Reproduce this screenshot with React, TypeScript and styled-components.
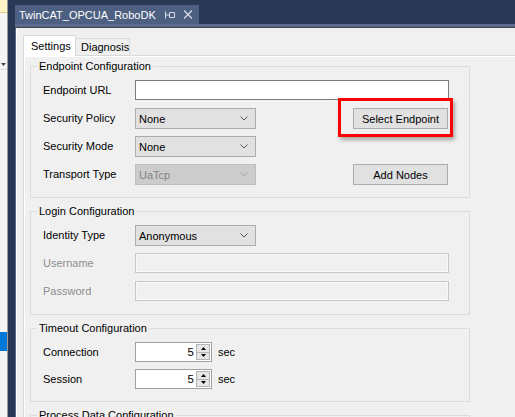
import React from "react";
import styled, { createGlobalStyle } from "styled-components";

const GlobalStyle = createGlobalStyle`
  html, body {
    margin: 0;
    padding: 0;
    background: #293955;
  }
  body {
    font-family: "Liberation Sans", Arial, sans-serif;
    font-size: 11px;
    color: #000;
  }
  * {
    box-sizing: border-box;
  }
`;

const Frame = styled.div`
  width: 515px;
  height: 417px;
  overflow: hidden;
  display: flex;
  background: #293955;
`;

// left docked panel that peeks in at the edge
const Sidebar = styled.div`
  width: 8px;
  flex: none;
  margin-right: 7px;
  background: #f5f5f5;
  border-right: 1px solid #9a9a9a;
  display: flex;
  flex-direction: column;
`;

const SideHeader = styled.div`
  height: 13px;
  background: #fff4c4;
  border-bottom: 1px solid #e3cf8c;
`;

const SideCombo = styled.div`
  height: 57px;
  display: flex;
  align-items: flex-end;
  padding: 0 0 3px 1px;
  border-bottom: 1px solid #dadada;
`;

const SideSelection = styled.div`
  margin-top: 262px;
  height: 19px;
  background: #0078d7;
`;

const DocWindow = styled.div`
  flex: 1;
  min-width: 0;
  display: flex;
  flex-direction: column;
`;

const DocTabRow = styled.div`
  height: 24px;
  flex: none;
  padding-top: 5px;
  display: flex;
`;

const DocTab = styled.div`
  width: 184px;
  height: 19px;
  display: flex;
  align-items: center;
  padding-left: 4px;
  background: #4d6082;
  color: #fff;
  font-size: 11px;
`;

const DocTitle = styled.span`
  flex: 1;
  white-space: nowrap;
`;

const DocIcon = styled.svg<{ $gap: number }>`
  flex: none;
  margin-right: ${(p) => p.$gap}px;
`;

const DocWell = styled.div`
  height: 4px;
  flex: none;
  background: #5d6b8b;
  border-bottom: 1px solid #3c4350;
`;

const DocBody = styled.div`
  flex: 1;
  display: flex;
  flex-direction: column;
  overflow: hidden;
  padding: 7px 0 0 7px;
  background: #f0f0f0;
  border-left: 1px solid #5d6b8b;
  box-shadow: inset 1px 0 0 #ffffff;
`;

const TabStrip = styled.div`
  height: 20px;
  flex: none;
  display: flex;
  align-items: flex-end;
  position: relative;
  z-index: 1;
`;

const TabButton = styled.div<{ $active?: boolean }>`
  display: flex;
  align-items: center;
  border: 1px solid #d9d9d9;
  border-bottom: none;
  ${(p) =>
    p.$active
      ? `
    width: 53px;
    height: 21px;
    margin-bottom: -1px;
    padding-left: 7px;
    background: #ffffff;
  `
      : `
    width: 54px;
    height: 17px;
    padding-left: 5px;
    border-left: none;
    background: #f0f0f0;
  `}
`;

const TabPage = styled.div`
  width: 520px;
  flex: 1;
  display: flex;
  flex-direction: column;
  gap: 7px;
  padding: 4px 0 0 6px;
  background: #f0f0f0;
  border: 1px solid #d9d9d9;
  box-shadow: inset 1px 1px 0 #ffffff;
`;

const Group = styled.fieldset`
  width: 440px;
  min-width: 0;
  margin: 0;
  padding: 0;
  flex: none;
  border: 1px solid #dcdcdc;
`;

const GroupTitle = styled.legend`
  margin-left: 6px;
  padding: 0 2px;
  line-height: 13px;
  font-size: 11px;
`;

const GroupBody = styled.div<{ $columns: string; $row: number }>`
  display: grid;
  grid-template-columns: ${(p) => p.$columns};
  grid-auto-rows: ${(p) => p.$row}px;
  row-gap: 7px;
  align-items: center;
  padding: 7px 20px 12px 12px;
`;

const Label = styled.span<{ $disabled?: boolean }>`
  grid-column: 1;
  line-height: 13px;
  white-space: nowrap;
  color: ${(p) => (p.$disabled ? "#8d8d8d" : "#000")};
`;

const TextBox = styled.div<{ $disabled?: boolean }>`
  grid-column: 2 / span 3;
  align-self: start;
  height: 20px;
  background: ${(p) => (p.$disabled ? "#f0f0f0" : "#ffffff")};
  border: 1px solid ${(p) => (p.$disabled ? "#c8c8c8" : "#7a7a7a")};
  box-shadow: ${(p) => (p.$disabled ? "inset 0 0 0 1px #fafafa" : "none")};
`;

const Combo = styled.div<{ $disabled?: boolean }>`
  grid-column: 2;
  height: 21px;
  display: flex;
  align-items: center;
  justify-content: space-between;
  padding: 0 7px 0 3px;
  background: ${(p) => (p.$disabled ? "#cccccc" : "#e1e1e1")};
  border: 1px solid ${(p) => (p.$disabled ? "#bfbfbf" : "#adadad")};
  color: ${(p) => (p.$disabled ? "#838383" : "#000")};
`;

const ButtonSlot = styled.div`
  grid-column: 4;
  position: relative;
  width: 95px;
  height: 21px;
`;

const Button = styled.div`
  width: 100%;
  height: 100%;
  display: flex;
  align-items: center;
  justify-content: center;
  background: #e1e1e1;
  border: 1px solid #adadad;
`;

// red annotation frame drawn over the screenshot
const Highlight = styled.div`
  position: absolute;
  top: -10px;
  left: -15px;
  right: -5px;
  bottom: -8px;
  border: 3px solid #ff0000;
  box-shadow: 2px 3px 4px rgba(0, 0, 0, 0.3);
  pointer-events: none;
`;

const NumericRow = styled.div`
  grid-column: 2;
  display: flex;
  align-items: center;
`;

const Numeric = styled.div`
  width: 77px;
  height: 20px;
  flex: none;
  display: flex;
  padding: 1px 1px 1px 0;
  background: #ffffff;
  border: 1px solid #a0a0a0;
`;

const NumericValue = styled.span`
  flex: 1;
  text-align: right;
  padding-right: 2px;
  line-height: 16px;
  font-size: 11.5px;
`;

const Spin = styled.div`
  width: 14px;
  display: flex;
  flex-direction: column;
`;

const SpinButton = styled.div`
  flex: 1;
  display: flex;
  align-items: center;
  justify-content: center;
  background: #e6e6e6;
  border: 1px solid #b4b4b4;
  & + & {
    border-top: none;
  }
`;

const Unit = styled.span`
  margin-left: 6px;
`;

const Chevron = ({ disabled }: { disabled?: boolean }) => (
  <svg width="8" height="5" viewBox="0 0 8 5">
    <polyline
      points="0.5,0.5 4,4 7.5,0.5"
      fill="none"
      stroke={disabled ? "#a9a9a9" : "#555"}
      strokeWidth="1"
    />
  </svg>
);

const Triangle = ({ up }: { up?: boolean }) => (
  <svg width="5" height="3" viewBox="0 0 5 3">
    <polygon points={up ? "0,3 2.5,0 5,3" : "0,0 2.5,3 5,0"} fill="#000" />
  </svg>
);

const NumericField = ({ value }: { value: number }) => (
  <NumericRow>
    <Numeric>
      <NumericValue>{value}</NumericValue>
      <Spin>
        <SpinButton>
          <Triangle up />
        </SpinButton>
        <SpinButton>
          <Triangle />
        </SpinButton>
      </Spin>
    </Numeric>
    <Unit>sec</Unit>
  </NumericRow>
);

const COLUMNS = "92px 121px 97px 96px";

const App = () => {
  return (
    <Frame>
      <GlobalStyle />
      <Sidebar>
        <SideHeader />
        <SideCombo>
          <svg width="5" height="3" viewBox="0 0 5 3">
            <polygon points="0,0 2.5,3 5,0" fill="#444" />
          </svg>
        </SideCombo>
        <SideSelection />
      </Sidebar>

      <DocWindow>
        <DocTabRow>
          <DocTab>
            <DocTitle>TwinCAT_OPCUA_RoboDK</DocTitle>
            <DocIcon $gap={8} width="10" height="8" viewBox="0 0 10 8">
              <path d="M0.5 0.5 V7.5 M1 4 H4 M4.5 1.5 H9.5 V6.5 H4.5 Z" fill="none" stroke="#d5dbe6" strokeWidth="1" />
            </DocIcon>
            <DocIcon $gap={6} width="10" height="9" viewBox="0 0 10 9">
              <path d="M1 0.5 L9 8.5 M9 0.5 L1 8.5" stroke="#d5dbe6" strokeWidth="1.3" />
            </DocIcon>
          </DocTab>
        </DocTabRow>
        <DocWell />

        <DocBody>
          <TabStrip>
            <TabButton $active>Settings</TabButton>
            <TabButton>Diagnosis</TabButton>
          </TabStrip>
          <TabPage>
            <Group>
              <GroupTitle>Endpoint Configuration</GroupTitle>
              <GroupBody $columns={COLUMNS} $row={21}>
                <Label>Endpoint URL</Label>
                <TextBox />

                <Label>Security Policy</Label>
                <Combo>
                  None
                  <Chevron />
                </Combo>
                <ButtonSlot>
                  <Button>Select Endpoint</Button>
                  <Highlight />
                </ButtonSlot>

                <Label>Security Mode</Label>
                <Combo>
                  None
                  <Chevron />
                </Combo>

                <Label>Transport Type</Label>
                <Combo $disabled>
                  UaTcp
                  <Chevron disabled />
                </Combo>
                <ButtonSlot>
                  <Button>Add Nodes</Button>
                </ButtonSlot>
              </GroupBody>
            </Group>

            <Group>
              <GroupTitle>Login Configuration</GroupTitle>
              <GroupBody $columns={COLUMNS} $row={21}>
                <Label>Identity Type</Label>
                <Combo>
                  Anonymous
                  <Chevron />
                </Combo>

                <Label $disabled>Username</Label>
                <TextBox $disabled />

                <Label $disabled>Password</Label>
                <TextBox $disabled />
              </GroupBody>
            </Group>

            <Group>
              <GroupTitle>Timeout Configuration</GroupTitle>
              <GroupBody $columns="92px auto" $row={20}>
                <Label>Connection</Label>
                <NumericField value={5} />

                <Label>Session</Label>
                <NumericField value={5} />
              </GroupBody>
            </Group>

            <Group>
              <GroupTitle>Process Data Configuration</GroupTitle>
              <GroupBody $columns={COLUMNS} $row={21}>
                <Label>&nbsp;</Label>
              </GroupBody>
            </Group>
          </TabPage>
        </DocBody>
      </DocWindow>
    </Frame>
  );
};

export default App;
